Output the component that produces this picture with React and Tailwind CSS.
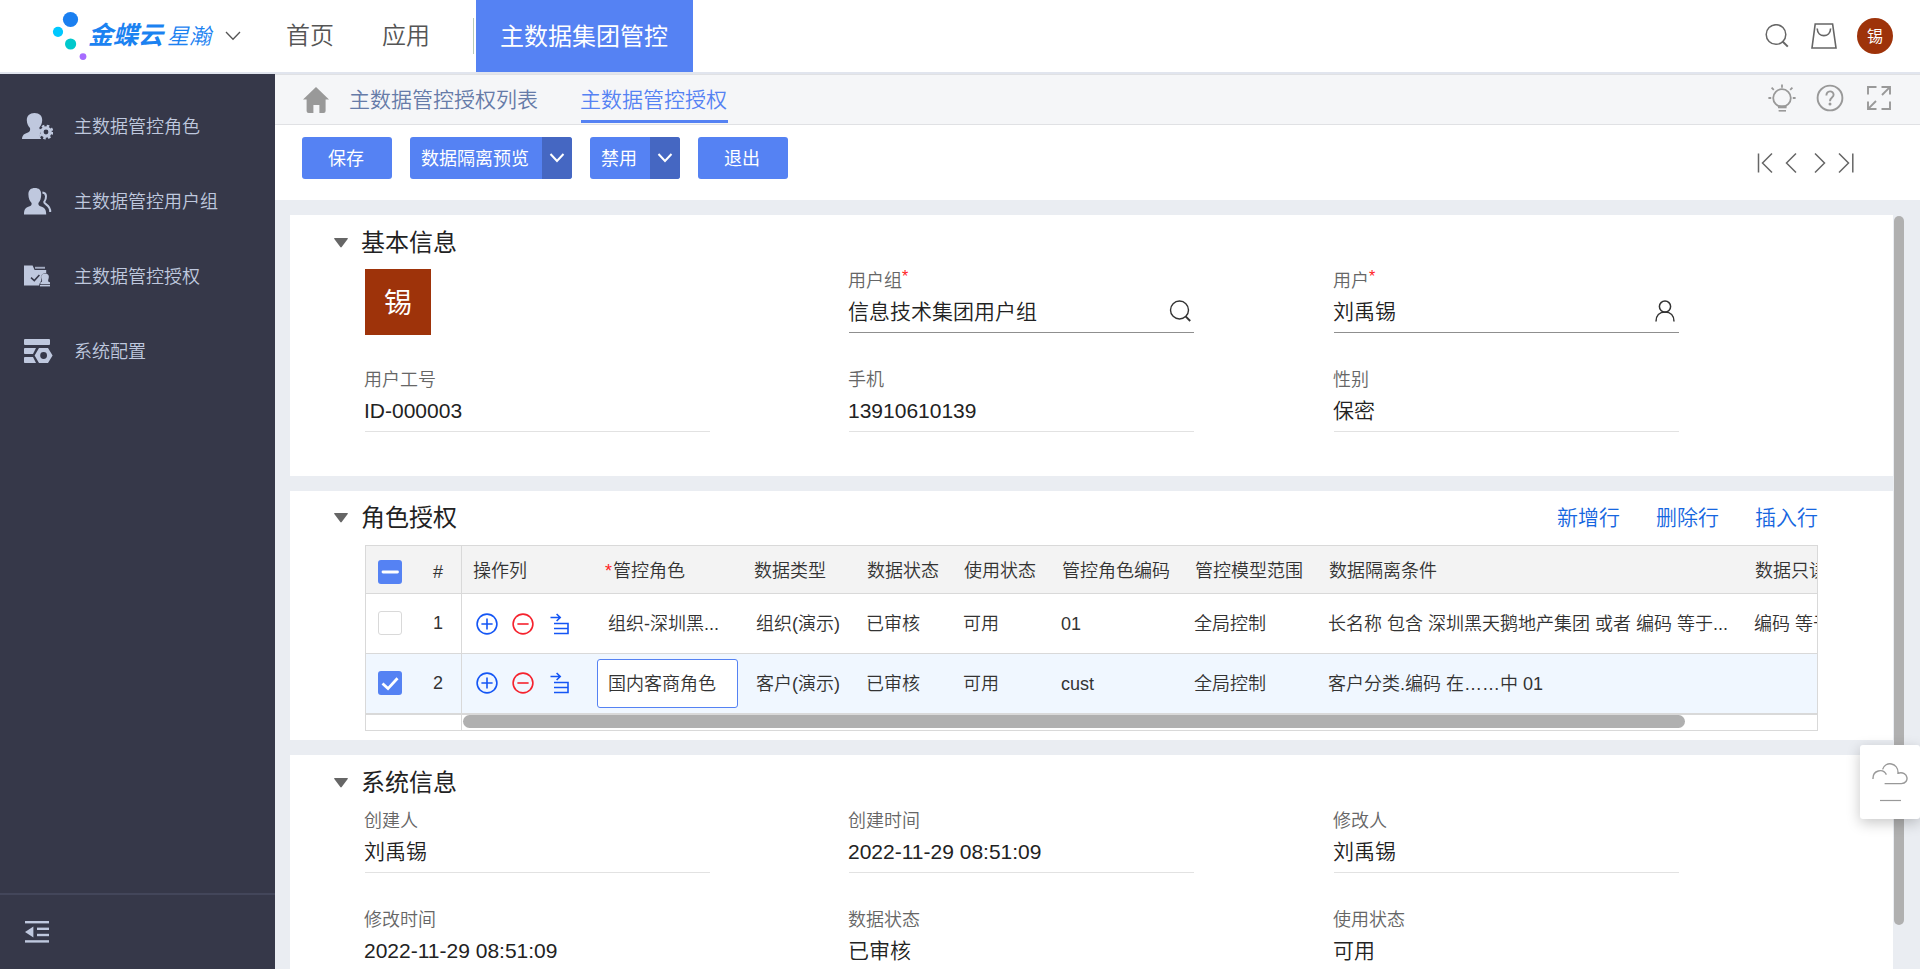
import React from "react";

const iconPaint = { fill: "none", strokeLinecap: "butt", strokeLinejoin: "miter" };

function Logo() {
  return (
    <div className="flex h-[72px] w-[162px] shrink-0 items-start">
      <svg className="block shrink-0" width="36" height="72" viewBox="52 0 36 72">
        <circle cx="70.5" cy="19.5" r="7.6" fill="#1a7ff0" />
        <circle cx="58" cy="31.8" r="5.1" fill="#00c8ff" />
        <circle cx="70.6" cy="44" r="5.6" fill="#00c8cc" />
        <circle cx="83" cy="56.6" r="3.4" fill="#a66cff" />
      </svg>
      <div className="flex items-baseline whitespace-nowrap italic text-[#1b82f1]">
        <span className="text-[25px] leading-[70px] font-bold">金蝶云</span>
        <span className="ml-[4px] text-[22px] leading-[70px]">星瀚</span>
      </div>
    </div>
  );
}

function Header() {
  return (
    <header className="flex h-[74px] shrink-0 items-start border-b-2 border-[#e1e5ee] bg-white">
      <div className="flex h-[72px] items-center pl-[52px]">
        <Logo />
        <svg className="ml-[11px] block shrink-0" width="16" height="10" viewBox="0 0 16 10" stroke="#555" strokeWidth="1.3" {...iconPaint}>
          <path d="M1 1 L8 8.3 L15 1" />
        </svg>
      </div>
      <nav className="flex h-[72px] items-center whitespace-nowrap text-[24px] leading-[74px] text-[#555]">
        <span className="ml-[45px] w-[48px]">首页</span>
        <span className="ml-[48px] w-[48px]">应用</span>
        <span className="ml-[43px] h-[36px] w-px bg-[#b9cbb9]" />
        <span className="ml-[2px] h-[72px] w-[217px] bg-[#5582f3] pr-px text-center font-normal text-white">主数据集团管控</span>
      </nav>
      <div className="ml-auto flex h-[72px] items-center pr-[27px]">
        <svg className="block" width="24" height="24" viewBox="0 0 24 24" stroke="#666" strokeWidth="1.5" {...iconPaint}>
          <circle cx="11" cy="10.5" r="9.8" />
          <path d="M17.3 17.3 L22.8 22.6" strokeWidth="2" />
        </svg>
        <svg className="ml-[22px] block" width="26" height="26" viewBox="0 0 26 26" stroke="#666" strokeWidth="1.6" {...iconPaint}>
          <path d="M4.2 1 H21.6 L25 25 H1 Z" />
          <path d="M6.2 5.5 C6.5 15 19.3 15 19.6 5.5" />
        </svg>
        <div className="ml-[20px] flex h-[36px] w-[36px] items-center justify-center rounded-full bg-[#9e330a] pt-[2px] text-[16px] leading-none font-normal text-white">锡</div>
      </div>
    </header>
  );
}

const menu = [
  {
    label: "主数据管控角色",
    icon: (
      <g fill="#bfc8de">
        <path d="M12.5 0 C17.5 0 20.3 3 20.2 7.2 C20.1 11 18.6 13 17.4 14.6 C17 16.6 17.6 17.4 19 18.2 C17.2 20.6 17.4 23.6 19.2 26 H0 C0.2 21.6 2.6 20.6 6 19.4 C8 18.7 8.4 17 8 15 C6.6 13.4 4.8 11 4.8 7.2 C4.8 3 7.6 0 12.5 0 Z" />
        <circle cx="24" cy="19" r="4.1" fill="none" stroke="#bfc8de" strokeWidth="3.4" />
        <circle cx="24" cy="19" r="6.2" fill="none" stroke="#bfc8de" strokeWidth="2.4" strokeDasharray="2.5 2.37" />
      </g>
    ),
  },
  {
    label: "主数据管控用户组",
    icon: (
      <g fill="#bfc8de">
        <path d="M12.8 0 C17 0 19.2 2 19.2 6.4 C19.2 10.6 18 13 16.4 15 C16.2 17 17 17.8 19 18.6 C22.6 20 24.2 21.4 24.2 26.6 H2 C2 21.4 3.4 20 7 18.6 C9.2 17.8 9.8 17 9.6 15 C8 13 6.4 10.6 6.4 6.4 C6.4 2 9 0 12.8 0 Z" />
        <path d="M20.4 4.6 C25.2 5 24.6 10.4 22.2 14 C22 16.6 28.6 16.8 28.2 24" fill="none" stroke="#bfc8de" strokeWidth="2" />
      </g>
    ),
  },
  {
    label: "主数据管控授权",
    icon: (
      <g fill="#bfc8de">
        <path d="M2 2.6 H10.6 L12.6 7 H24.2 V10 C20.4 10 18 12.6 19.2 16.4 C19.8 18.2 17.4 19 17.2 22.6 H2 Z" />
        <rect x="13" y="3.8" width="10" height="1.9" opacity="0.8" />
        <path d="M9 14.6 L12.3 17.6 L17.4 12" fill="none" stroke="#363849" strokeWidth="1.5" />
        <path d="M23 10.4 C26.4 10.4 27.4 12.8 26.6 15.4 C25.8 17.4 25.8 19 28 19.2 V21.2 H18.4 V19.2 C20.6 19 20.4 17.2 19.4 15.4 C18.6 12.8 19.8 10.4 23 10.4 Z" />
        <rect x="18" y="22" width="10" height="1.4" />
      </g>
    ),
  },
  {
    label: "系统配置",
    icon: (
      <g fill="#bfc8de">
        <rect x="2" y="1" width="26" height="6" rx="1" />
        <path d="M2.8 10 H14 L11 16 H2.8 Q2 16 2 15.2 V10.8 Q2 10 2.8 10 Z" />
        <path d="M2.8 19 H11 L14 25 H2.8 Q2 25 2 24.2 V19.8 Q2 19 2.8 19 Z" />
        <path fillRule="evenodd" d="M17 10 H26 L30.6 17.5 L26 25 H17 L12.6 17.5 Z M21.6 14.1 A3.4 3.4 0 1 0 21.6 20.9 A3.4 3.4 0 1 0 21.6 14.1 Z" />
      </g>
    ),
  },
];

function Sidebar() {
  return (
    <aside className="flex w-[275px] shrink-0 flex-col bg-[#363849]">
      <ul className="flex flex-col pt-[15px]">
        {menu.map((m) => (
          <li key={m.label} className="flex h-[75px] items-center pl-[22px]">
            <svg className="block shrink-0" width="31" height="27" viewBox="0 0 31 27">{m.icon}</svg>
            <span className="ml-[21px] whitespace-nowrap text-[18px] leading-[26px] text-[#bfc8de]">{m.label}</span>
          </li>
        ))}
      </ul>
      <div className="mt-auto flex h-[76px] items-center border-t-2 border-[#43465a] pl-[25px]">
        <svg className="block" width="24" height="22" viewBox="0 0 24 22" fill="#bfc8de">
          <rect y="0" width="24" height="2.4" />
          <rect x="12" y="6.6" width="12" height="2.4" />
          <rect x="12" y="12.8" width="12" height="2.4" />
          <rect y="19.2" width="24" height="2.4" />
          <path d="M0 11 L8.4 5.6 V16.4 Z" />
        </svg>
      </div>
    </aside>
  );
}

function TabBar() {
  return (
    <div className="flex h-[51px] shrink-0 items-start border-t border-b border-[#e0e1e4] bg-[#f5f6f8] pr-[29px] pl-[28px] text-[21px] whitespace-nowrap">
      <svg className="mt-[12px] block" width="26" height="26" viewBox="0 0 26 26" fill="#999">
        <path d="M13 0 L26 12.4 H22.6 V24 Q22.6 26 20.6 26 H16.4 V18 H10.4 V26 H5.6 Q3.6 26 3.6 24 V12.4 H0 Z" />
      </svg>
      <span className="ml-[20px] h-[48px] w-[190px] leading-[49px] text-[#667ba8]">主数据管控授权列表</span>
      <span className="ml-[42px] h-[48px] w-[147px] border-b-[3px] border-[#5582f3] leading-[49px] text-[#5582f3]">
        <span className="-ml-px">主数据管控授权</span>
      </span>
      <div className="mt-[9px] ml-auto flex items-center">
        <svg className="block" width="28" height="28" viewBox="0 0 28 28" stroke="#999" strokeWidth="1.8" {...iconPaint}>
          <circle cx="14" cy="14" r="8.8" />
          <path d="M14 0.4 V3.8 M0.4 14 H3.2 M24.8 14 H27.6 M3.6 3.6 L5.8 5.8 M24.4 3.6 L22.2 5.8" />
          <path d="M10 22.8 H18.6" strokeWidth="3" />
          <path d="M10.6 26.8 H18" strokeWidth="1.6" />
        </svg>
        <svg className="ml-[20px] block" width="28" height="28" viewBox="0 0 28 28" stroke="#999" strokeWidth="1.9" {...iconPaint}>
          <circle cx="14" cy="14" r="12.4" />
          <path d="M10.4 11.6 C10.4 6 17.6 6.2 17.6 10.8 C17.6 13.8 14 13.4 14 17.2" />
          <circle cx="14" cy="20" r="1.5" fill="#999" stroke="none" />
        </svg>
        <svg className="ml-[23px] block" width="24" height="24" viewBox="0 0 24 24" stroke="#999" strokeWidth="1.9" {...iconPaint}>
          <path d="M1 8.5 V1 H9.5 M14.5 1 H23 V8.5 M23 15.5 V23 H14.5 M9.5 23 H1 V15.5 M22.6 1.4 L15 9 M1.4 22.6 L9 15" />
        </svg>
      </div>
    </div>
  );
}

function ActionButton({ label, width, split }) {
  return (
    <div className="flex h-[42px] overflow-hidden rounded-[3px] bg-[#5582f3] text-[18px] leading-[45px] font-normal text-white">
      <span className={`${width} pr-[2px] text-center whitespace-nowrap`}>{label}</span>
      {split && (
        <span className="flex w-[30px] items-center justify-center bg-[#4567c2]">
          <svg width="16" height="10" viewBox="0 0 16 10" stroke="#fff" strokeWidth="2" {...iconPaint}>
            <path d="M1.5 1 L8 8 L14.5 1" />
          </svg>
        </span>
      )}
    </div>
  );
}

function Toolbar() {
  return (
    <div className="flex h-[75px] shrink-0 items-start gap-[18px] bg-white pt-[12px] pl-[27px]">
      <ActionButton label="保存" width="w-[90px]" />
      <ActionButton label="数据隔离预览" width="w-[132px]" split />
      <ActionButton label="禁用" width="w-[60px]" split />
      <ActionButton label="退出" width="w-[90px]" />
      <svg className="mt-[15px] mr-[65px] ml-auto block" width="100" height="22" viewBox="0 0 100 22" stroke="#666" strokeWidth="1.5" {...iconPaint}>
        <path d="M3.5 1.5 V20.5 M17 1.5 L7.5 11 L17 20.5" />
        <path d="M41 1.5 L31.5 11 L41 20.5" />
        <path d="M60 1.5 L69.5 11 L60 20.5" />
        <path d="M84 1.5 L93.5 11 L84 20.5 M97.8 1.5 V20.5" />
      </svg>
    </div>
  );
}

function SectionTitle({ children }) {
  return (
    <div className="flex items-center">
      <svg className="block" width="14" height="10" viewBox="0 0 14 10" fill="#666">
        <path d="M0.6 0 H13.4 Q14.2 0.2 13.7 1 L7.7 9 Q7 9.8 6.3 9 L0.3 1 Q-0.2 0.2 0.6 0 Z" />
      </svg>
      <h2 className="ml-[13px] text-[24px] leading-[36px] font-normal whitespace-nowrap text-[#222]">{children}</h2>
    </div>
  );
}

function Field({ label, value, required, icon }) {
  return (
    <div className={`mb-[32px] h-[67px] w-[345px] border-b ${icon ? "border-[#8f8f8f]" : "border-[#e2e2e2]"}`}>
      <div className="-ml-px flex h-[27px] text-[18px] leading-[30px] whitespace-nowrap text-[#666]">
        {label}
        {required && <span className="text-[16px] leading-[22px] text-[#f22]">*</span>}
      </div>
      <div className="-ml-px flex h-[37px] items-center justify-between text-[21px] leading-[37px] whitespace-nowrap text-[#222]">
        <span>{value}</span>
        {icon}
      </div>
    </div>
  );
}

const searchIcon = (
  <svg className="mr-[3px] mb-[2px] block" width="22" height="22" viewBox="0 0 22 22" stroke="#333" strokeWidth="1.4" {...iconPaint}>
    <circle cx="10.5" cy="10" r="9" />
    <path d="M16.6 16.4 L21.2 21" strokeWidth="1.9" />
  </svg>
);

const userIcon = (
  <svg className="mr-[4px] mb-[2px] block" width="20" height="22" viewBox="0 0 20 22" stroke="#333" strokeWidth="1.5" {...iconPaint}>
    <circle cx="10" cy="6.6" r="5.6" />
    <path d="M1 21.4 C1 15.6 4.4 12 10 12 C15.6 12 19 15.6 19 21.4" />
  </svg>
);

function BasicInfo() {
  return (
    <section className="h-[261px] shrink-0 bg-white pt-[10px] pl-[44px]">
      <SectionTitle>基本信息</SectionTitle>
      <div className="mt-[5px] grid grid-cols-[484px_485px_345px] pl-[31px]">
        <div className="mt-[3px] flex h-[66px] w-[66px] items-center justify-center bg-[#9e330a] pt-[4px] text-[28px] leading-none font-normal text-white">锡</div>
        <Field label="用户组" required value="信息技术集团用户组" icon={searchIcon} />
        <Field label="用户" required value="刘禹锡" icon={userIcon} />
        <Field label="用户工号" value="ID-000003" />
        <Field label="手机" value="13910610139" />
        <Field label="性别" value="保密" />
      </div>
    </section>
  );
}

function SystemInfo() {
  return (
    <section className="h-[261px] shrink-0 bg-white pt-[10px] pl-[44px]">
      <SectionTitle>系统信息</SectionTitle>
      <div className="mt-[5px] grid grid-cols-[484px_485px_345px] pl-[31px]">
        <Field label="创建人" value="刘禹锡" />
        <Field label="创建时间" value="2022-11-29 08:51:09" />
        <Field label="修改人" value="刘禹锡" />
        <Field label="修改时间" value="2022-11-29 08:51:09" />
        <Field label="数据状态" value="已审核" />
        <Field label="使用状态" value="可用" />
      </div>
    </section>
  );
}

function Checkbox({ state }) {
  if (state === "off") return <span className="block h-[24px] w-[24px] rounded-[3px] border border-[#d9d9d9] bg-white" />;
  return (
    <span className="block h-[24px] w-[24px] rounded-[3px] bg-[#5582f3]">
      <svg className="block" width="24" height="24" viewBox="0 0 24 24" stroke="#fff" strokeWidth="2.8" {...iconPaint}>
        {state === "on" ? <path d="M4.5 12.5 L10 17.6 L19.5 7.2" /> : <path d="M5 12 H19.5" strokeLinecap="round" />}
      </svg>
    </span>
  );
}

function RowActions() {
  return (
    <div className="flex h-full items-center pb-px pl-[14px]">
      <svg className="block" width="22" height="22" viewBox="0 0 22 22" stroke="#1456f5" strokeWidth="1.6" {...iconPaint}>
        <circle cx="11" cy="11" r="9.9" />
        <path d="M11 5.4 V16.6 M5.4 11 H16.6" />
      </svg>
      <svg className="ml-[14px] block" width="22" height="22" viewBox="0 0 22 22" stroke="#f5222d" strokeWidth="1.6" {...iconPaint}>
        <circle cx="11" cy="11" r="9.9" />
        <path d="M5.4 11 H16.6" />
      </svg>
      <svg className="ml-[16px] block" width="20" height="22" viewBox="0 0 20 22" stroke="#1456f5" strokeWidth="1.6" {...iconPaint}>
        <path d="M0.5 4.5 H10 M6.6 1 L10.2 4.5 L6.6 8 M4 10.5 H18 M4 15.5 H18 M4 20.5 H18 M18 9.7 V21.3" />
      </svg>
    </div>
  );
}

const gridCols = "grid grid-cols-[96px_135px_149px_110px_97px_98px_133px_134px_426px_200px]";

const headers = ["数据类型", "数据状态", "使用状态", "管控角色编码", "管控模型范围", "数据隔离条件", "数据只读条件"];

const rows = [
  { n: 1, role: "组织-深圳黑...", cells: ["组织(演示)", "已审核", "可用", "01", "全局控制", "长名称 包含 深圳黑天鹅地产集团 或者 编码 等于...", "编码 等于..."] },
  { n: 2, role: "国内客商角色", selected: true, cells: ["客户(演示)", "已审核", "可用", "cust", "全局控制", "客户分类.编码 在……中 01", ""] },
];

function RoleTable() {
  return (
    <div className="ml-[31px] h-[186px] w-[1453px] overflow-hidden border border-[#d9d9d9] text-[18px] whitespace-nowrap text-[#333]">
      <div className={`${gridCols} h-[48px] border-b border-[#d9d9d9] bg-[#f3f3f3] leading-[51px]`}>
        <div className="flex items-center border-r border-[#d9d9d9] pt-px pl-[12px] leading-[48px]">
          <Checkbox state="mixed" />
          <span className="ml-[31px]">#</span>
        </div>
        <div className="pl-[11px]">操作列</div>
        <div className="flex pl-[8px]">
          <span className="w-[8px] text-[#f22]">*</span>
          <span>管控角色</span>
        </div>
        {headers.map((h, i) => (
          <div key={h} className={i === 0 ? "pl-[8px]" : "pl-[11px]"}>{h}</div>
        ))}
      </div>
      {rows.map((r) => (
        <div key={r.n} className={`${gridCols} border-b leading-[61px] ${r.selected ? "h-[61px] border-b-2 border-[#d9d9d9] bg-[#f0f7ff]" : "h-[60px] border-[#d9d9d9]"}`}>
          <div className="flex h-[59px] items-center border-r border-[#d9d9d9] pb-px pl-[12px] leading-[59px]">
            <Checkbox state={r.selected ? "on" : "off"} />
            <span className="ml-[31px]">{r.n}</span>
          </div>
          <RowActions />
          {r.selected ? (
            <div className="mt-[5px] h-[49px] w-[141px] rounded-[3px] border border-[#5582f3] bg-white pl-[10px] leading-[49px]">{r.role}</div>
          ) : (
            <div className="pl-[11px]">{r.role}</div>
          )}
          {r.cells.map((c, i) => (
            <div key={i} className="h-[59px] pl-[10px]">{c}</div>
          ))}
        </div>
      ))}
      <div className="flex h-[15px]">
        <div className="w-[96px] border-r border-[#d9d9d9]" />
        <div className="ml-px h-[13px] w-[1222px] rounded-full bg-[#b0b0b0]" />
      </div>
    </div>
  );
}

function RoleAuth() {
  return (
    <section className="h-[249px] shrink-0 bg-white pt-[9px] pl-[44px]">
      <div className="mb-[9px] flex w-[1484px] items-center justify-between">
        <SectionTitle>角色授权</SectionTitle>
        <div className="flex gap-[36px] text-[21px] leading-[36px] whitespace-nowrap text-[#1666e0]">
          <span>新增行</span>
          <span>删除行</span>
          <span>插入行</span>
        </div>
      </div>
      <RoleTable />
    </section>
  );
}

function FloatingHelper() {
  return (
    <div className="absolute top-[745px] right-0 flex h-[74px] w-[60px] flex-col items-center rounded-[3px] bg-white pt-[17px] shadow-[0_4px_14px_rgba(0,0,0,0.22)]">
      <svg className="block" width="36" height="40" viewBox="0 0 36 40" stroke="#999" strokeWidth="1.4" {...iconPaint}>
        <path d="M1 17 C0.6 8 11 6 14.4 12.6" />
        <path d="M10.6 7.4 C13 -1.4 26.6 0.4 26 11.2 C36.6 8.4 38 21.4 29.4 21.6 H12.6" />
        <path d="M8 38.5 H29" strokeWidth="1.2" />
      </svg>
    </div>
  );
}

export default function App() {
  return (
    <div className="relative flex h-[969px] w-[1920px] flex-col overflow-hidden bg-[#eaedf2] font-['Liberation_Sans','Noto_Sans_CJK_SC',sans-serif] font-[350]">
      <Header />
      <div className="flex min-h-0 flex-1">
        <Sidebar />
        <main className="flex min-w-0 flex-1 flex-col">
          <TabBar />
          <Toolbar />
          <div className="flex min-h-0 flex-1">
            <div className="ml-[15px] flex w-[1603px] flex-col gap-[15px] overflow-hidden pt-[15px]">
              <BasicInfo />
              <RoleAuth />
              <SystemInfo />
            </div>
            <div className="mt-[16px] ml-px h-[709px] w-[10px] rounded-full bg-[#b0b0b0]" />
          </div>
        </main>
      </div>
      <FloatingHelper />
    </div>
  );
}
